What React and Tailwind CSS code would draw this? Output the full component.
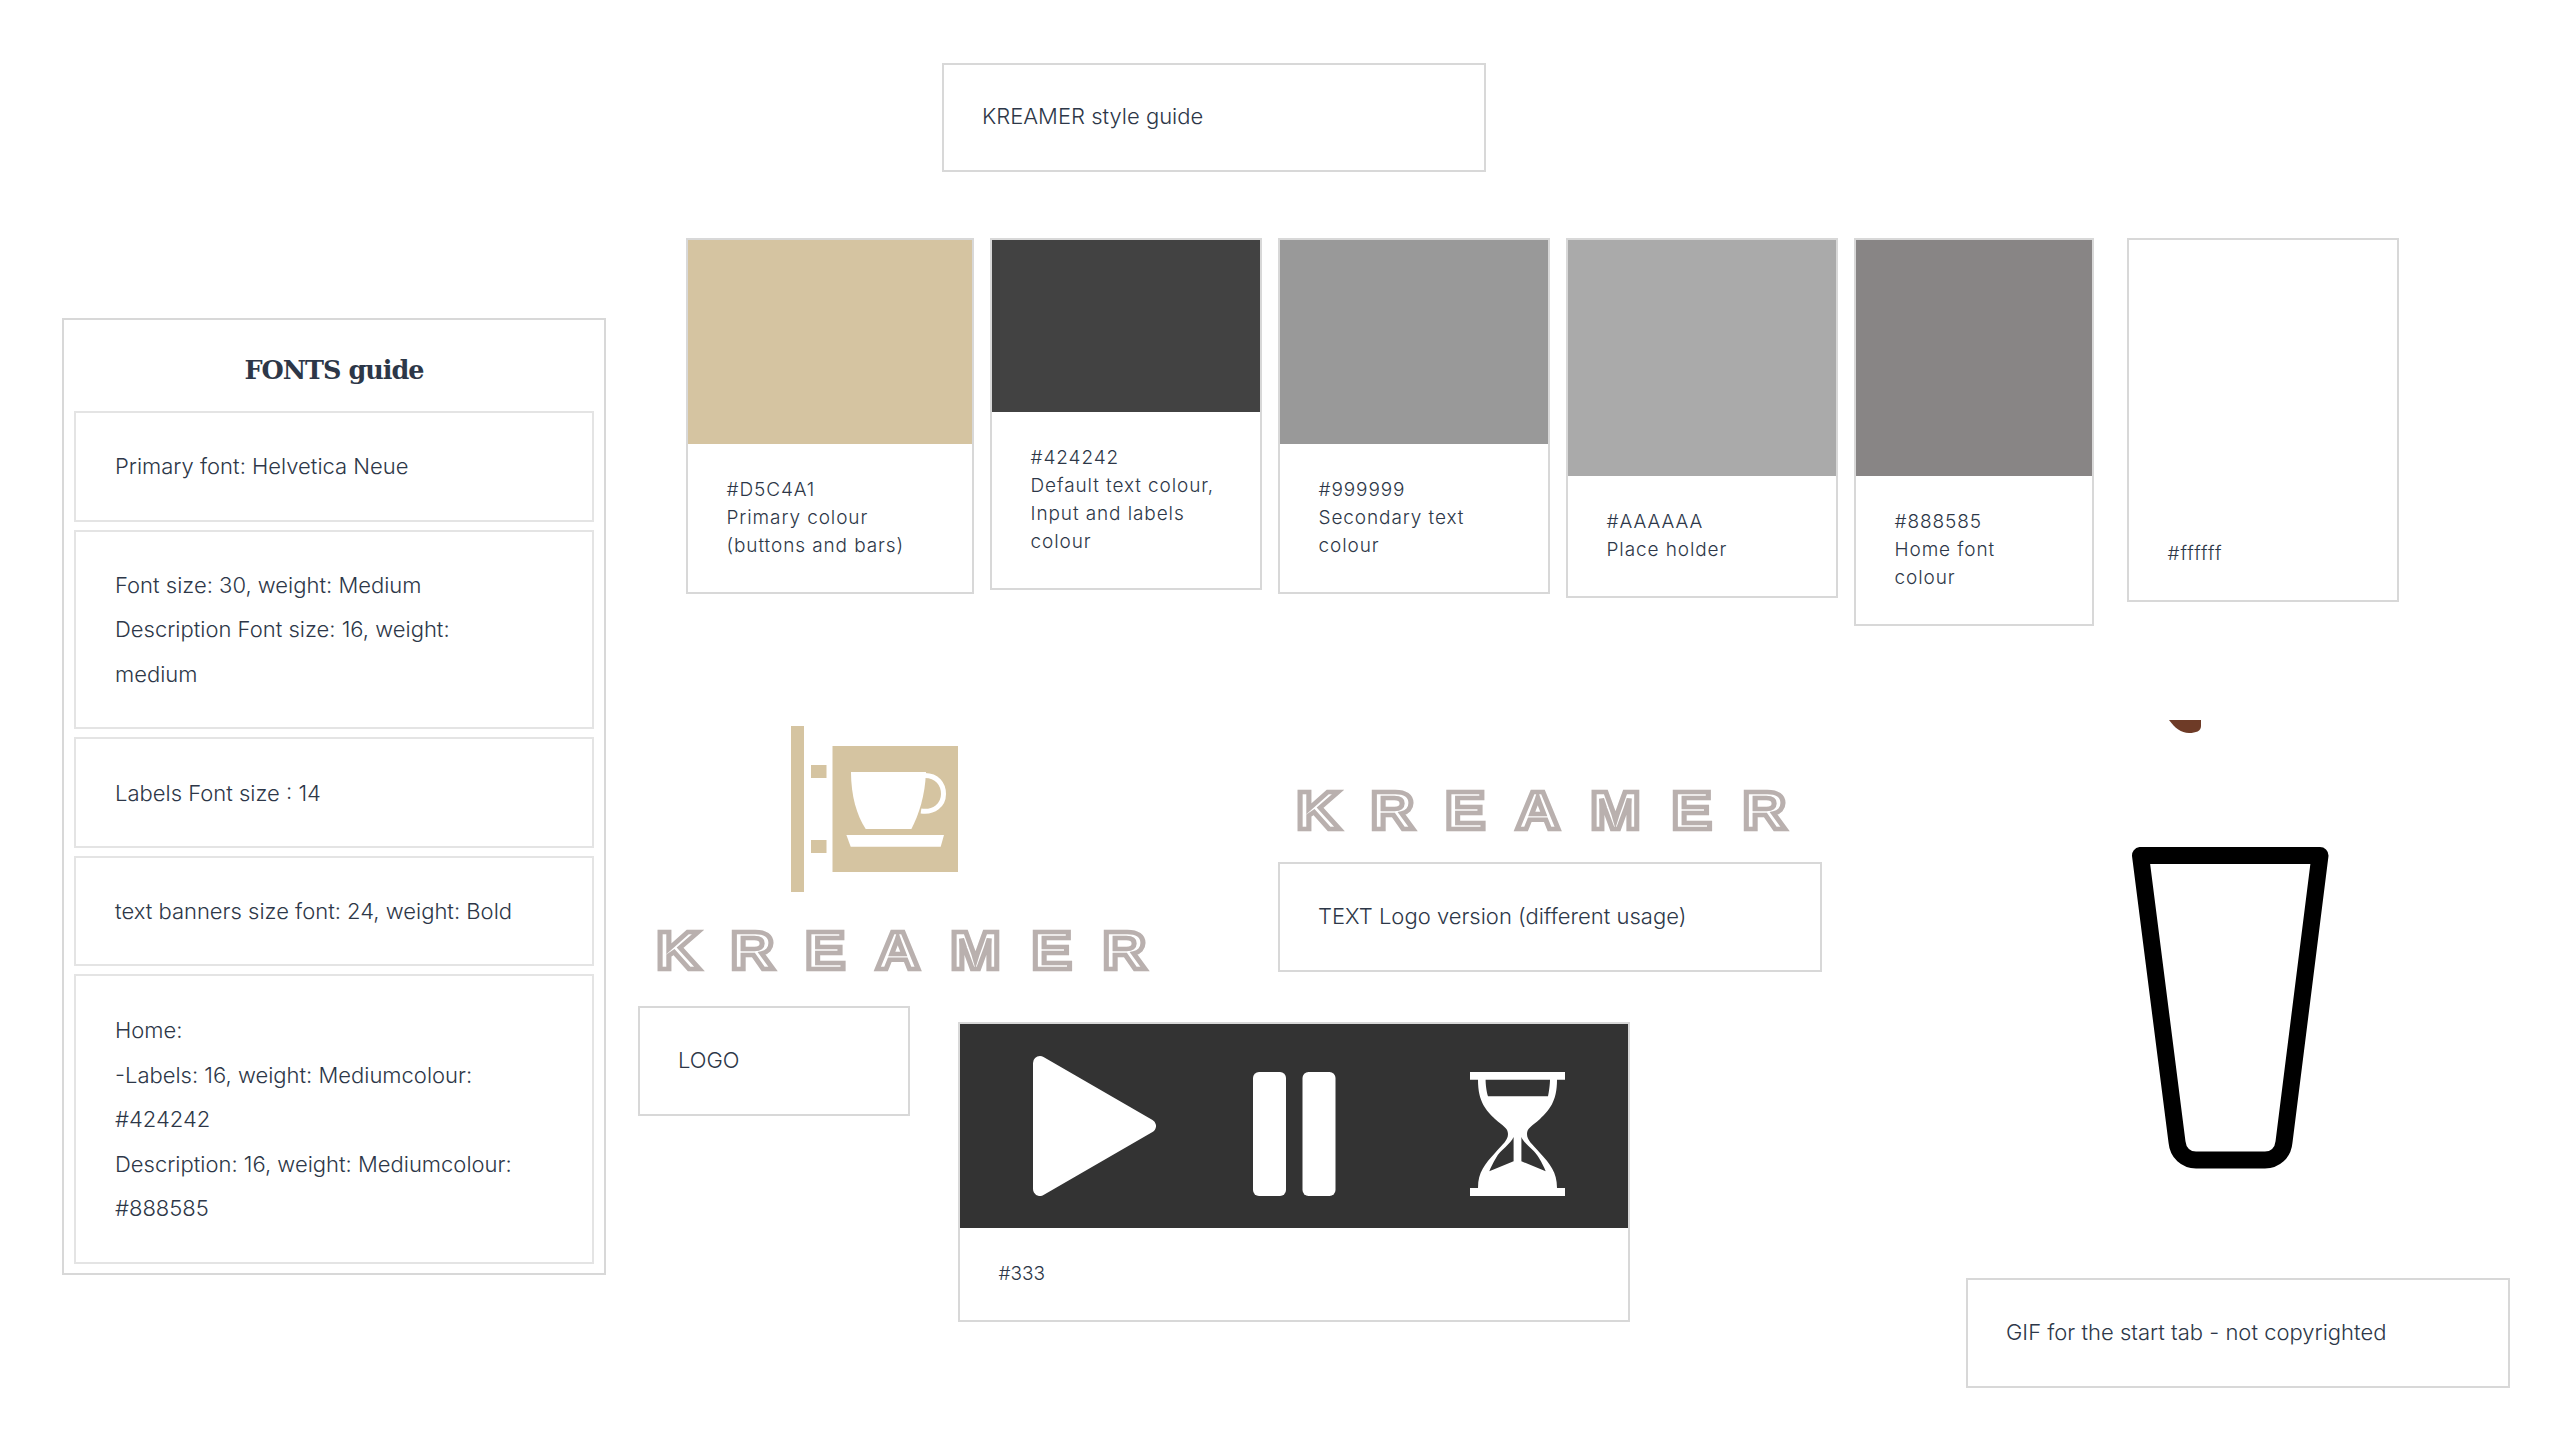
import React from "react";

const swatches = [
  { width: "w-[288px]", fill: "h-[204px] bg-[#d5c4a1]", lines: ["#D5C4A1", "Primary colour", "(buttons and bars)"] },
  { width: "w-[272px]", fill: "h-[172px] bg-[#424242]", lines: ["#424242", "Default text colour,", "Input and labels", "colour"] },
  { width: "w-[272px]", fill: "h-[204px] bg-[#999999]", lines: ["#999999", "Secondary text", "colour"] },
  { width: "w-[272px]", fill: "h-[236px] bg-[#aaaaaa]", lines: ["#AAAAAA", "Place holder"] },
  { width: "w-[240px]", fill: "h-[236px] bg-[#888585]", lines: ["#888585", "Home font", "colour"] },
  { width: "w-[272px] ml-[17px]", fill: "h-[268px] bg-white", lines: ["#ffffff"] },
];

const Note = ({ className, children }) => (
  <div className={`flex items-center border-2 border-[#d8d8d8] bg-white pb-[2px] pl-[38px] text-[22px] font-light ${className}`}>
    {children}
  </div>
);

const FontRow = ({ lines, pad = "pt-[31px] pb-[31px]" }) => (
  <div className={`border-2 border-[#e4e4e4] pl-[39px] pr-[67px] text-[22px] font-light leading-[44.5px] ${pad}`}>
    {lines.map((line) => (
      <p key={line}>{line}</p>
    ))}
  </div>
);

const Wordmark = ({ className = "" }) => (
  <span className={`block font-['Liberation_Sans',sans-serif] font-bold text-[54px] leading-[42px] tracking-[26.8px] whitespace-nowrap text-transparent [-webkit-text-stroke:4.5px_#b9b0ae] origin-left scale-x-[1.13] ${className}`}>
    KREAMER
  </span>
);

const SignLogo = () => (
  <svg width="168" height="166" viewBox="0 0 168 166" fill="#d5c4a1">
    <rect x="0" y="0" width="13" height="166" />
    <rect x="20" y="39" width="15.5" height="13" />
    <rect x="20" y="114" width="15.5" height="13" />
    <rect x="41.5" y="20" width="125.5" height="126" />
    <path d="M60 46 H135 C134 70 128 88 120.4 103 H74.7 C66 90 60 70 60 46 Z" fill="#fff" />
    <path d="M134 49.5 C146 49.5 152.5 58 152.5 68 C152.5 79 143 87 130 85" fill="none" stroke="#fff" strokeWidth="5" />
    <path d="M55.4 109 H153 L149.7 120.7 H59.7 Z" fill="#fff" />
  </svg>
);

const PlayIcon = () => (
  <svg width="123" height="140" viewBox="0 0 123 140" fill="#fff" stroke="#fff" strokeWidth="14" strokeLinejoin="round">
    <path d="M7 7 L116 70 L7 133 Z" />
  </svg>
);

const PauseIcon = () => (
  <svg width="83" height="124" viewBox="0 0 83 124" fill="#fff">
    <rect x="0" y="0" width="33" height="124" rx="6" />
    <rect x="49.5" y="0" width="33" height="124" rx="6" />
  </svg>
);

const HourglassIcon = () => (
  <svg width="95" height="124" viewBox="0 0 95 124" fill="#fff" fillRule="evenodd">
    <path d="M0 0 H95 V7.7 H87 C87 30 79 38 70 47 C62 54 57 56 57 62 C57 68 62 72 70 81 C80 92 87 100 87 116 H95 V124 H0 V116 H8 C8 100 15 92 25 81 C33 72 38 68 38 62 C38 56 33 54 25 47 C16 38 8 30 8 7.7 H0 Z M15.6 7.7 H80 C80 12 79 20 78 24.3 H18 C16.5 20 15.6 12 15.6 7.7 Z M43.6 65 C41 72 30 78 26 86 C23 91 21 95 19.3 99.3 L43.6 89.3 Z M51.4 65 C54 72 65 78 69 86 C72 91 74 95 75.7 99.3 L51.4 89.3 Z" />
  </svg>
);

const CoffeeDrop = () => (
  <svg width="32" height="13" viewBox="0 0 32 13" fill="#6e3b27">
    <path d="M0 0 H32 V6 C32 11 27 13 20 13 C12 13 6 8 0 0 Z" />
  </svg>
);

const Glass = () => (
  <svg width="200" height="324" viewBox="0 0 200 324" fill="none">
    <path
      d="M9.5 9.5 H189 L153 296 C152 307 144 314 134 314 H65 C55 314 47 307 46 296 Z"
      stroke="#000"
      strokeWidth="17"
      strokeLinejoin="round"
    />
  </svg>
);

export default function App() {
  return (
    <div className="relative w-[2572px] h-[1450px] overflow-hidden bg-white font-['Inter',sans-serif] text-[#2d3748]">
      {/* The page is a free design board: each group keeps its own place on it */}
      <Note className="absolute left-[942px] top-[63px] w-[544px] h-[109px]">KREAMER style guide</Note>

      {/* Fonts guide */}
      <div className="absolute left-[62px] top-[318px] w-[544px] h-[957px] border-2 border-[#d8d8d8] px-[10px]">
        <h2 className="h-[91px] pt-[32px] text-center font-['DejaVu_Serif',serif] font-bold text-[25.5px] leading-[36px] tracking-[-1px]">
          FONTS guide
        </h2>
        <div className="flex flex-col gap-2">
          <FontRow lines={["Primary font: Helvetica Neue"]} />
          <FontRow lines={["Font size: 30, weight: Medium", "Description Font size: 16, weight:", "medium"]} />
          <FontRow pad="pt-[32px] pb-[30px]" lines={["Labels Font size : 14"]} />
          <FontRow lines={["text banners size font: 24, weight: Bold"]} />
          <FontRow
            pad="pt-[32px] pb-[31px]"
            lines={["Home:", "-Labels: 16, weight: Mediumcolour:", "#424242", "Description: 16, weight: Mediumcolour:", "#888585"]}
          />
        </div>
      </div>

      {/* Colour swatches */}
      <div className="absolute left-[686px] top-[238px] flex items-start gap-4">
        {swatches.map((swatch) => (
          <div key={swatch.lines[0]} className={`border-2 border-[#d8d8d8] ${swatch.width}`}>
            <div className={swatch.fill} />
            <div className="py-[32px] pl-[38.5px] text-[19px] font-light leading-[28px] tracking-[0.9px]">
              {swatch.lines.map((line) => (
                <p key={line}>{line}</p>
              ))}
            </div>
          </div>
        ))}
      </div>

      {/* Logo */}
      <div className="absolute left-[638px] top-[726px] flex flex-col items-start">
        <div className="ml-[153px]">
          <SignLogo />
        </div>
        <Wordmark className="mt-[37px] ml-[18px]" />
        <Note className="mt-[35px] w-[272px] h-[110px]">LOGO</Note>
      </div>

      {/* Text logo */}
      <div className="absolute left-[1278px] top-[789px] flex flex-col items-start">
        <Wordmark className="ml-[18px]" />
        <Note className="mt-[31px] w-[544px] h-[110px]">TEXT Logo version (different usage)</Note>
      </div>

      {/* Player controls */}
      <div className="absolute left-[958px] top-[1022px] w-[672px] border-2 border-[#d8d8d8]">
        <div className="flex items-start h-[204px] bg-[#333333] pl-[73px] pt-[32px]">
          <PlayIcon />
          <div className="ml-[97px] mt-[16px]">
            <PauseIcon />
          </div>
          <div className="ml-[134px] mt-[16px]">
            <HourglassIcon />
          </div>
        </div>
        <div className="h-[92px] pl-[38.5px] pt-[32px] text-[19px] font-light leading-[28px]">#333</div>
      </div>

      {/* Start tab gif */}
      <div className="absolute left-[1966px] top-[720px] flex flex-col items-start">
        <div className="flex ml-[203px]">
          <CoffeeDrop />
        </div>
        <div className="flex ml-[165px] mt-[113px]">
          <Glass />
        </div>
        <Note className="mt-[108px] w-[544px] h-[110px]">GIF for the start tab - not copyrighted</Note>
      </div>
    </div>
  );
}
